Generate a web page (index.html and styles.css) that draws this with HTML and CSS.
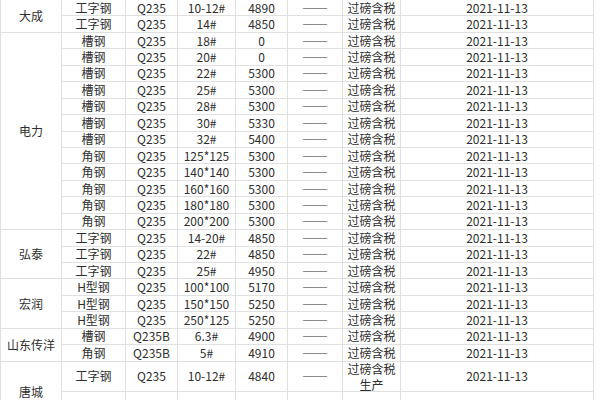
FILE: index.html
```html
<!DOCTYPE html>
<html lang="zh-CN">
<head>
<meta charset="utf-8">
<title>钢材价格表</title>
<link rel="stylesheet" href="styles.css">
</head>
<body>
<div class="sheet">
  <div class="co span2">大成</div>
  <div class="c">工字钢</div><div class="c">Q235</div><div class="c">10-12#</div><div class="c">4890</div><div class="c dash">——</div><div class="c">过磅含税</div><div class="c">2021-11-13</div>
  <div class="c">工字钢</div><div class="c">Q235</div><div class="c">14#</div><div class="c">4850</div><div class="c dash">——</div><div class="c">过磅含税</div><div class="c">2021-11-13</div>

  <div class="co span12">电力</div>
  <div class="c">槽钢</div><div class="c">Q235</div><div class="c">18#</div><div class="c">0</div><div class="c dash">——</div><div class="c">过磅含税</div><div class="c">2021-11-13</div>
  <div class="c">槽钢</div><div class="c">Q235</div><div class="c">20#</div><div class="c">0</div><div class="c dash">——</div><div class="c">过磅含税</div><div class="c">2021-11-13</div>
  <div class="c">槽钢</div><div class="c">Q235</div><div class="c">22#</div><div class="c">5300</div><div class="c dash">——</div><div class="c">过磅含税</div><div class="c">2021-11-13</div>
  <div class="c">槽钢</div><div class="c">Q235</div><div class="c">25#</div><div class="c">5300</div><div class="c dash">——</div><div class="c">过磅含税</div><div class="c">2021-11-13</div>
  <div class="c">槽钢</div><div class="c">Q235</div><div class="c">28#</div><div class="c">5300</div><div class="c dash">——</div><div class="c">过磅含税</div><div class="c">2021-11-13</div>
  <div class="c">槽钢</div><div class="c">Q235</div><div class="c">30#</div><div class="c">5330</div><div class="c dash">——</div><div class="c">过磅含税</div><div class="c">2021-11-13</div>
  <div class="c">槽钢</div><div class="c">Q235</div><div class="c">32#</div><div class="c">5400</div><div class="c dash">——</div><div class="c">过磅含税</div><div class="c">2021-11-13</div>
  <div class="c">角钢</div><div class="c">Q235</div><div class="c">125*125</div><div class="c">5300</div><div class="c dash">——</div><div class="c">过磅含税</div><div class="c">2021-11-13</div>
  <div class="c">角钢</div><div class="c">Q235</div><div class="c">140*140</div><div class="c">5300</div><div class="c dash">——</div><div class="c">过磅含税</div><div class="c">2021-11-13</div>
  <div class="c">角钢</div><div class="c">Q235</div><div class="c">160*160</div><div class="c">5300</div><div class="c dash">——</div><div class="c">过磅含税</div><div class="c">2021-11-13</div>
  <div class="c">角钢</div><div class="c">Q235</div><div class="c">180*180</div><div class="c">5300</div><div class="c dash">——</div><div class="c">过磅含税</div><div class="c">2021-11-13</div>
  <div class="c">角钢</div><div class="c">Q235</div><div class="c">200*200</div><div class="c">5300</div><div class="c dash">——</div><div class="c">过磅含税</div><div class="c">2021-11-13</div>

  <div class="co span3">弘泰</div>
  <div class="c">工字钢</div><div class="c">Q235</div><div class="c">14-20#</div><div class="c">4850</div><div class="c dash">——</div><div class="c">过磅含税</div><div class="c">2021-11-13</div>
  <div class="c">工字钢</div><div class="c">Q235</div><div class="c">22#</div><div class="c">4850</div><div class="c dash">——</div><div class="c">过磅含税</div><div class="c">2021-11-13</div>
  <div class="c">工字钢</div><div class="c">Q235</div><div class="c">25#</div><div class="c">4950</div><div class="c dash">——</div><div class="c">过磅含税</div><div class="c">2021-11-13</div>

  <div class="co span3">宏润</div>
  <div class="c">H型钢</div><div class="c">Q235</div><div class="c">100*100</div><div class="c">5170</div><div class="c dash">——</div><div class="c">过磅含税</div><div class="c">2021-11-13</div>
  <div class="c">H型钢</div><div class="c">Q235</div><div class="c">150*150</div><div class="c">5250</div><div class="c dash">——</div><div class="c">过磅含税</div><div class="c">2021-11-13</div>
  <div class="c">H型钢</div><div class="c">Q235</div><div class="c">250*125</div><div class="c">5250</div><div class="c dash">——</div><div class="c">过磅含税</div><div class="c">2021-11-13</div>

  <div class="co span2">山东传洋</div>
  <div class="c">槽钢</div><div class="c">Q235B</div><div class="c">6.3#</div><div class="c">4900</div><div class="c dash">——</div><div class="c">过磅含税</div><div class="c">2021-11-13</div>
  <div class="c">角钢</div><div class="c">Q235B</div><div class="c">5#</div><div class="c">4910</div><div class="c dash">——</div><div class="c">过磅含税</div><div class="c">2021-11-13</div>

  <div class="co span2">唐城</div>
  <div class="c">工字钢</div><div class="c">Q235</div><div class="c">10-12#</div><div class="c">4840</div><div class="c dash">——</div><div class="c two"><span class="ln">过磅含税</span><span class="ln">生产</span></div><div class="c">2021-11-13</div>
  <div class="c">工字钢</div><div class="c">Q235</div><div class="c">14-16#</div><div class="c">4890</div><div class="c dash">——</div><div class="c">过磅含税</div><div class="c">2021-11-13</div>
</div>
</body>
</html>
```

FILE: styles.css
```css
html, body {
  margin: 0;
  padding: 0;
  background: #ffffff;
  overflow: hidden;
}

body {
  font-family: "Noto Sans CJK SC", "Noto Sans", sans-serif;
  font-size: 12px;
  color: #2e2e2e;
}

.sheet {
  display: grid;
  width: max-content;
  grid-template-columns: 60px 63px 51px 57px 51px 54px 57px 192px;
  grid-template-rows: repeat(22, 15.45px) 29px 30px;
  gap: 1px;
  padding: 0 1px 0 1px;
  background: #e0e0e0;
}

.c, .co {
  background: #ffffff;
  display: flex;
  align-items: center;
  justify-content: center;
  line-height: 1;
  white-space: nowrap;
  text-align: center;
}

.span2 { grid-row: span 2; }
.span3 { grid-row: span 3; }
.span12 { grid-row: span 12; }

.dash {
  font-family: "Liberation Sans", sans-serif;
  color: #8a8a8a;
}

.two {
  flex-direction: column;
  gap: 4px;
  padding-top: 2px;
}

.ln {
  display: block;
  line-height: 12px;
}
```
